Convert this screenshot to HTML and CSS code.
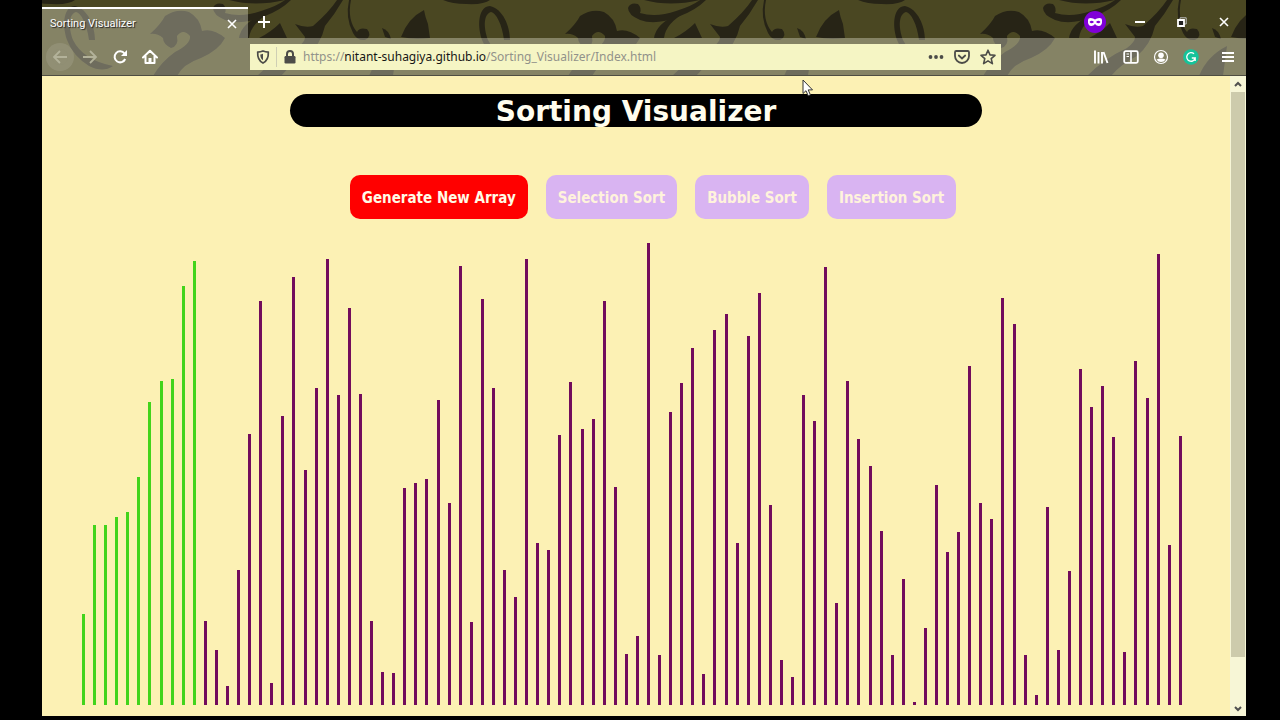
FILE: index.html
```html
<!DOCTYPE html>
<html lang="en">
<head>
<meta charset="utf-8">
<title>Sorting Visualizer</title>
<link rel="stylesheet" href="styles.css">
</head>
<body>
<div class="window">
  <header class="chrome">
    <svg class="theme" width="100%" height="100%" aria-hidden="true">
      <defs>
        <pattern id="swirl" x="-57" y="0" width="415" height="76" patternUnits="userSpaceOnUse">
          <rect width="415" height="76" fill="#4a4722"/>
          <g fill="#272416">
            <path d="M43 0H90Q84 5 66 4Q52 4 43 0Z"/>
            <path d="M1 37Q8 18 24 10Q25 16 28 24L30 38Q14 40 1 37Z"/>
            <path d="M82 40C76 22 80 6 90 6C103 9 110 26 110 40H104C102 24 96 13 91 12C84 14 83 26 88 40Q98 60 128 66Q118 73 104 66Q88 56 82 40Z"/>
            <path d="M165 34Q176 24 180 16Q192 8 204 12Q215 18 217 31Q228 28 240 38Q234 50 216 58Q198 64 192 76H168Q176 62 190 52Q206 44 205 36Q198 28 192 36Q194 46 186 48Q178 44 178 38Q172 33 165 34Z"/>
            <path d="M228 8Q230 2 238 4Q242 8 240 13Q256 18 276 11Q292 6 300 0H306Q296 10 280 16Q256 26 240 20Q228 15 228 8Z"/>
            <path d="M244 0H300Q270 7 244 0Z"/>
            <path d="M254 38Q256 24 276 15L285 13Q266 23 264 38Z"/>
            <path d="M274 38Q286 32 295 23L302 38Z"/>
            <path d="M310 24Q320 28 328 26Q344 12 352 0H358Q350 14 340 26Q336 44 322 56Q306 64 296 76H272Q290 58 312 48Q320 42 320 37Z"/>
            <path d="M366 0Q362 20 372 32Q374 27 382 29Q388 36 380 40Q372 41 368 33Q360 18 364 0Z"/>
            <path d="M397 28Q404 30 406 39L400 37Z"/>
            <path d="M384 76Q392 56 412 46L408 76Z"/>
          </g>
        </pattern>
      </defs>
      <rect width="100%" height="100%" fill="url(#swirl)"/>
    </svg>
    <div class="tabbar">
      <div class="tab">
        <span class="tab-title">Sorting Visualizer</span>
        <button class="icon-btn" aria-label="Close tab"><svg width="10" height="10" viewBox="0 0 10 10"><path d="M1 1L9 9M9 1L1 9" stroke="#fff" stroke-width="1.6"/></svg></button>
      </div>
      <button class="icon-btn new-tab" aria-label="New tab"><svg width="14" height="14" viewBox="0 0 14 14"><path d="M7 1V13M1 7H13" stroke="#fff" stroke-width="2"/></svg></button>
      <div class="window-controls">
        <svg width="22" height="22" viewBox="0 0 22 22" role="img" aria-label="Private browsing"><circle cx="11" cy="11" r="11" fill="#8000d7"/><path fill="#fff" fill-rule="evenodd" d="M4 9Q4 7 6.500 7Q9.500 7 11 8.500Q12.500 7 15.500 7Q18 7 18 9Q18.500 15 14.500 15Q12.500 15 11 13Q9.500 15 7.500 15Q3.500 15 4 9ZM5.500 11Q7.500 13.500 10 11Q7.500 8.500 5.500 11ZM16.500 11Q14.500 13.500 12 11Q14.500 8.500 16.500 11Z"/></svg>
        <button class="icon-btn" aria-label="Minimize"><svg width="10" height="10" viewBox="0 0 10 10"><path d="M0 5H10" stroke="#fff" stroke-width="2"/></svg></button>
        <button class="icon-btn" aria-label="Restore"><svg width="10" height="10" viewBox="0 0 10 10"><path d="M3 2.500V.8H9.200V7H7.500" fill="none" stroke="#bbb"/><path d="M1 3H7V9H1Z" fill="#222" stroke="#fff" stroke-width="1.800"/></svg></button>
        <button class="icon-btn" aria-label="Close window"><svg width="10" height="10" viewBox="0 0 10 10"><path d="M1 1L9 9M9 1L1 9" stroke="#fff" stroke-width="1.600"/></svg></button>
      </div>
    </div>
    <div class="toolbar">
      <nav class="nav-buttons" aria-label="Navigation">
        <button class="icon-btn back" aria-label="Back"><svg width="16" height="16" viewBox="0 0 16 16"><path d="M8 2L2 8L8 14M2 8H15" fill="none" stroke="#b3b29a" stroke-width="1.800"/></svg></button>
        <button class="icon-btn" aria-label="Forward"><svg width="16" height="16" viewBox="0 0 16 16"><path d="M8 2L14 8L8 14M14 8H1" fill="none" stroke="#b3b29a" stroke-width="1.800"/></svg></button>
        <button class="icon-btn" aria-label="Reload"><svg width="16" height="16" viewBox="0 0 16 16"><path d="M12.500 4.500A5.500 5.500 0 1 0 13.200 10" fill="none" stroke="#fff" stroke-width="2"/><path d="M15 1V7H9Z" fill="#fff"/></svg></button>
        <button class="icon-btn" aria-label="Home"><svg width="16" height="16" viewBox="0 0 16 16"><path d="M1 8.500L8 1.800L15 8.500M3.500 7V14H12.500V7" fill="none" stroke="#fff" stroke-width="2" stroke-linejoin="round" stroke-linecap="round"/><path d="M6.500 14V9H9.500V14Z" fill="#fff"/></svg></button>
      </nav>
      <div class="urlbar">
        <svg width="14" height="14" viewBox="0 0 14 14" aria-hidden="true"><path d="M7 1Q9.500 2 12.300 2.200Q12.800 10 7 13Q1.200 10 1.700 2.200Q4.500 2 7 1Z" fill="none" stroke="#4c4c48" stroke-width="1.700"/><path d="M7 3.800V10.200Q4.200 8.500 4.300 4.500Q5.700 4.400 7 3.800Z" fill="#4c4c48"/></svg>
        <span class="divider"></span>
        <svg width="12" height="14" viewBox="0 0 12 14" aria-hidden="true"><rect x=".5" y="6" width="11" height="7.500" rx="1.200" fill="#4c4c48"/><path d="M3 7V4A3 3 0 0 1 9 4V7" fill="none" stroke="#4c4c48" stroke-width="2"/></svg>
        <a class="url" href="#">https://<span class="host">nitant-suhagiya.github.io</span>/Sorting_Visualizer/Index.html</a>
        <button class="icon-btn" aria-label="Page actions"><svg width="16" height="16" viewBox="0 0 16 16" fill="#4c4c48"><circle cx="2.500" cy="8" r="1.900"/><circle cx="8" cy="8" r="1.900"/><circle cx="13.500" cy="8" r="1.900"/></svg></button>
        <button class="icon-btn" aria-label="Save to Pocket"><svg width="16" height="16" viewBox="0 0 16 16" fill="none" stroke="#4c4c48" stroke-width="1.800" stroke-linecap="round"><path d="M2.200 2H13.800Q15 2 15 3.200V7A7 7 0 0 1 1 7V3.200Q1 2 2.200 2Z"/><path d="M4.800 6.500L8 9.500L11.200 6.500"/></svg></button>
        <button class="icon-btn" aria-label="Bookmark"><svg width="16" height="16" viewBox="0 0 16 16"><path d="M8 1.200L10 5.900L15 6.300L11.200 9.600L12.400 14.600L8 11.900L3.600 14.600L4.800 9.600L1 6.300L6 5.900Z" fill="none" stroke="#4c4c48" stroke-width="1.600" stroke-linejoin="round"/></svg></button>
      </div>
      <div class="extras">
        <button class="icon-btn" aria-label="Library"><svg width="16" height="16" viewBox="0 0 16 16"><path d="M2 1.500V14.500M5.500 3V14.500M9 3V14.500M10.500 3L14.500 14" stroke="#fff" stroke-width="1.900"/></svg></button>
        <button class="icon-btn" aria-label="Sidebars"><svg width="16" height="16" viewBox="0 0 16 16"><rect x="1.200" y="2.200" width="13.600" height="11.600" rx="1.500" fill="none" stroke="#fff" stroke-width="1.800"/><path d="M8 2V14" stroke="#fff" stroke-width="1.600"/><path d="M3.500 5H6M3.500 7.500H6" stroke="#fff"/></svg></button>
        <button class="icon-btn" aria-label="Account"><svg width="16" height="16" viewBox="0 0 16 16"><circle cx="8" cy="8" r="6.500" fill="none" stroke="#fff" stroke-width="1.200"/><circle cx="8" cy="6.300" r="2.800" fill="#fff"/><path d="M3.500 10.500Q8 8.500 12.500 10.500Q11 13 8 13Q5 13 3.500 10.500Z" fill="#fff"/></svg></button>
        <button class="icon-btn" aria-label="Grammarly"><svg width="16" height="16" viewBox="0 0 16 16"><circle cx="8" cy="8" r="7.800" fill="#15c39a"/><path d="M11 4.800A4.300 4.300 0 1 0 12.200 9H8.800M12.200 9V12" fill="none" stroke="#fff" stroke-width="1.300"/></svg></button>
        <button class="icon-btn menu" aria-label="Menu"><svg width="12" height="12" viewBox="0 0 12 12"><path d="M0 2H12M0 6H12M0 10H12" stroke="#fff" stroke-width="2"/></svg></button>
      </div>
    </div>
  </header>
  <div class="viewport">
    <main class="page">
      <h1 class="title">Sorting Visualizer</h1>
      <div class="actions">
        <button class="action action-new">Generate New Array</button>
        <button class="action" disabled>Selection Sort</button>
        <button class="action" disabled>Bubble Sort</button>
        <button class="action" disabled>Insertion Sort</button>
      </div>
      <div class="chart" id="chart"></div>
    </main>
    <div class="scrollbar" aria-hidden="true">
      <svg width="16" height="16" viewBox="0 0 16 16"><path d="M5 10L8 7L11 10" fill="none" stroke="#505050" stroke-width="2"/></svg>
      <div class="track"><div class="thumb"></div></div>
      <svg width="16" height="16" viewBox="0 0 16 16"><path d="M5 7L8 10L11 7" fill="none" stroke="#505050" stroke-width="2"/></svg>
    </div>
  </div>
  <svg class="pointer" width="12" height="18" viewBox="0 0 12 18" aria-hidden="true"><path d="M1 1V14.500L4 11.700L6.200 16.800L8.400 15.800L6.200 10.900H10.500Z" fill="#fff" stroke="#333"/></svg>
</div>
<script src="chart.js"></script>
</body>
</html>
```
FILE: styles.css
```css
* { box-sizing: border-box; }

body {
  margin: 0;
  min-height: 100vh;
  display: flex;
  padding: 0 34px 4px 42px;
  background: #000;
  font-family: "Noto Sans", sans-serif;
}

button {
  margin: 0;
  font: inherit;
  border: 0;
}

svg { display: block; flex: none; }

.window {
  position: relative;
  flex: 1;
  display: flex;
  flex-direction: column;
  min-width: 0;
}

/* Browser chrome */
.chrome {
  position: relative;
  border-bottom: 1px solid #4e4d42;
}

.theme {
  position: absolute;
  inset: 0;
}

.tabbar, .toolbar {
  position: relative;
  display: flex;
  align-items: center;
}

.tabbar { height: 38px; }

.tab {
  align-self: flex-end;
  display: flex;
  align-items: center;
  justify-content: space-between;
  width: 206px;
  height: 31px;
  padding: 0 8px;
  border-top: 2px solid #fff;
  background: rgba(255, 255, 240, 0.33);
}

.tab-title {
  font-family: Roboto, sans-serif;
  font-size: 11px;
  color: #fff;
  text-shadow: 1px 1px 1px #222;
}

.icon-btn {
  display: flex;
  align-items: center;
  justify-content: center;
  width: 16px;
  height: 16px;
  padding: 0;
  background: none;
}

.new-tab { margin: 6px 0 0 8px; }

.window-controls {
  display: flex;
  align-items: center;
  gap: 26px;
  margin: 6px 14px 0 auto;
}

.toolbar {
  height: 37px;
  background: rgba(255, 255, 240, 0.33);
}

.nav-buttons {
  display: flex;
  gap: 14px;
  width: 208px;
  padding-left: 10px;
}

.back {
  border-radius: 50%;
  box-shadow: 0 0 0 6px rgba(255, 255, 255, 0.1);
  background: rgba(255, 255, 255, 0.1);
}

.urlbar {
  display: flex;
  align-items: center;
  flex: 1;
  height: 26px;
  gap: 10px;
  padding: 0 5px 0 6px;
  background: #f5f5c4;
}

.divider {
  width: 1px;
  height: 20px;
  margin: 0 -3px 0 -4px;
  background: #cfcfb4;
}

.url {
  flex: 1;
  margin-left: -3px;
  font-size: 12px;
  line-height: 20px;
  color: #92928a;
  text-decoration: none;
  white-space: nowrap;
}

.host { color: #161616; }

.extras {
  display: flex;
  align-items: center;
  gap: 14px;
  padding: 0 10px 0 92px;
}

.menu { margin-left: 7px; }

/* Page */
.viewport {
  flex: 1;
  display: flex;
}

.page {
  flex: 1;
  display: flex;
  flex-direction: column;
  padding: 18px 40px 11px;
  background: #fcf1b4;
}

.title {
  align-self: center;
  width: 62.5%;
  margin: 0;
  padding-top: 2px;
  border-radius: 17px;
  background: #000;
  color: #fffdee;
  font: bold 28px/31px "DejaVu Sans", sans-serif;
  text-align: center;
}

.actions {
  display: flex;
  justify-content: center;
  gap: 18px;
  margin: 48px 0 24px 34px;
}

.action {
  padding: 13px 12px 11px;
  border-radius: 10px;
  background: #d9b4f2;
  color: #fff3dc;
  font: bold 15px/20px "DejaVu Sans Condensed", "DejaVu Sans", sans-serif;
  white-space: nowrap;
}

.action-new {
  background: #f00;
  color: #fffbe6;
}

.chart {
  flex: 1;
  min-height: 240px;
  margin-right: 8px;
  display: flex;
  align-items: flex-end;
  justify-content: space-between;
}

.bar {
  width: 3px;
  background: #720c5c;
}

.bar-sorted { background: #42d41b; }

.scrollbar {
  width: 16px;
  display: flex;
  flex-direction: column;
  background: #f7f6d6;
}

.track { flex: 1; }

.thumb {
  height: 93%;
  margin: 0 1px;
  background: #cdcbac;
}

.pointer {
  position: absolute;
  left: 760px;
  top: 79px;
}
```
FILE: chart.js
```js
const maximum = 462;
const sortedCount = 11;
const values = [
  91, 180, 180, 188, 193, 228, 303, 324, 326, 419,
  444, 84, 55, 19, 135, 271, 404, 22, 289, 428,
  235, 317, 446, 310, 397, 311, 84, 33, 32, 217,
  222, 226, 305, 202, 439, 83, 406, 317, 135, 108,
  446, 162, 155, 270, 323, 276, 286, 404, 218, 51,
  69, 462, 50, 293, 322, 357, 31, 375, 391, 162,
  369, 412, 200, 45, 28, 310, 284, 438, 102, 324,
  266, 239, 174, 50, 126, 3, 77, 220, 153, 173,
  339, 202, 186, 407, 381, 50, 10, 198, 55, 134,
  336, 298, 319, 268, 53, 344, 307, 451, 160, 269
];

const chart = document.getElementById("chart");
values.forEach((value, index) => {
  const bar = document.createElement("div");
  bar.className = index < sortedCount ? "bar bar-sorted" : "bar";
  bar.style.height = (value / maximum) * 100 + "%";
  chart.append(bar);
});
```
